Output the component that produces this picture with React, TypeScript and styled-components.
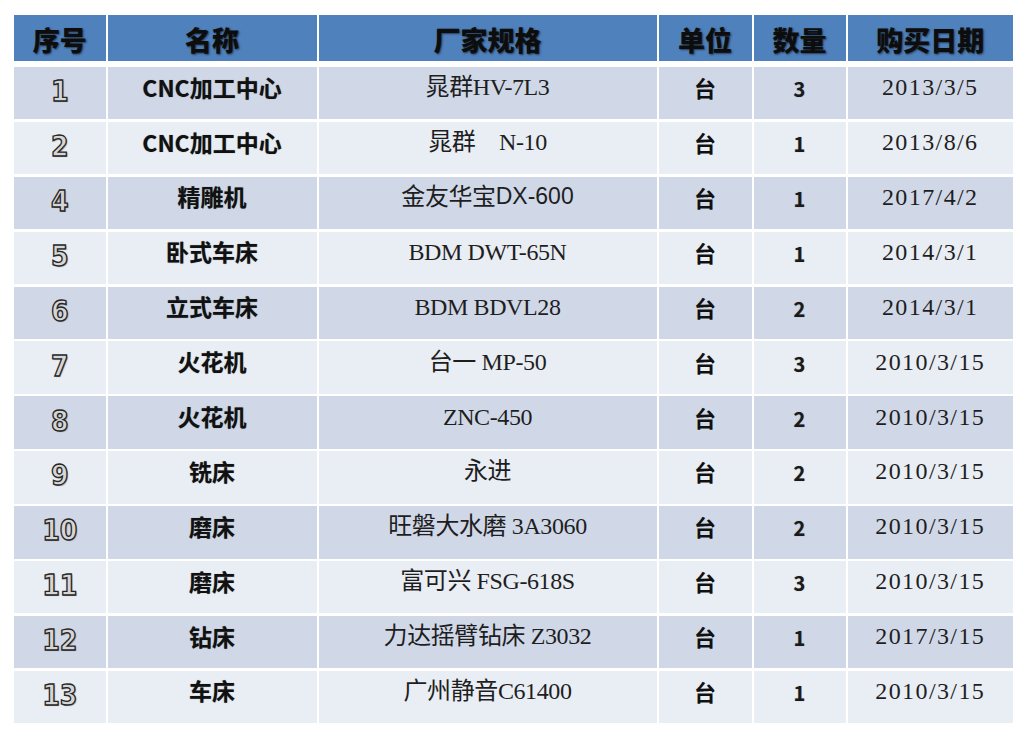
import {type FC} from 'react';
import styled, {createGlobalStyle, css} from 'styled-components';

const GlobalStyle = createGlobalStyle`
    html, body {
        margin: 0;
        padding: 0;
        background: #ffffff;
    }
    body {
        font-family: "Noto Sans CJK SC", "Liberation Sans", sans-serif;
        color: #111;
    }
`;

const COLUMNS = '91.5px 209px 338px 93px 92px 165.5px';

const Page = styled.div`
    width: 1027px;
    height: 752px;
    padding: 15px 0 0 14px;
    box-sizing: border-box;
`;

const Table = styled.div`
    width: 999px;
    display: flex;
    flex-direction: column;
`;

const HeaderRow = styled.div`
    display: grid;
    grid-template-columns: ${COLUMNS};
    column-gap: 2px;
    height: 46px;
    margin-bottom: 6px;
`;

const HeaderCell = styled.div`
    background: #4f81bd;
    display: flex;
    align-items: center;
    justify-content: center;
    padding-top: 3px;
    box-sizing: border-box;
    font-family: "Noto Sans CJK SC", sans-serif;
    font-weight: 900;
    font-size: 27px;
    color: #0d0d0d;
    text-shadow: 1px 1px 2px rgba(0, 0, 0, 0.55);
`;

const Body = styled.div`
    display: flex;
    flex-direction: column;
    gap: 2.5px;
`;

const Row = styled.div<{ $odd: boolean }>`
    display: grid;
    grid-template-columns: ${COLUMNS};
    column-gap: 2px;
    height: 52.4px;
    background: #ffffff;
    & > div {
        background: ${p => (p.$odd ? '#d0d8e8' : '#e9edf4')};
    }
`;

type Kind = 'no' | 'name' | 'spec' | 'unit' | 'qty' | 'date';

const kindStyles: Record<Kind, ReturnType<typeof css>> = {
    no: css`
        padding-bottom: 2px;
        font-family: "DejaVu Sans Condensed", "DejaVu Sans", sans-serif;
        font-stretch: condensed;
        font-weight: 700;
        font-size: 28px;
        color: #d6d6d6;
        -webkit-text-stroke: 1.3px #262626;
        text-shadow: 1px 1px 1px rgba(0, 0, 0, 0.35);
    `,
    name: css`
        font-family: "Noto Sans CJK SC", sans-serif;
        font-weight: 700;
        font-size: 23px;
        color: #111;
        text-shadow: 0 0 1px rgba(0, 0, 0, 0.45);
    `,
    spec: css`
        font-family: "Liberation Serif", "Noto Sans CJK SC", serif;
        font-size: 24px;
        letter-spacing: -0.4px;
        color: #1e1e1e;
    `,
    unit: css`
        font-family: "Noto Sans CJK SC", sans-serif;
        font-weight: 700;
        font-size: 22px;
        color: #111;
    `,
    qty: css`
        padding-bottom: 8px;
        font-family: "Noto Sans CJK SC", sans-serif;
        font-weight: 700;
        font-size: 20px;
        color: #1a1a1a;
        text-shadow: 0 0 1px rgba(0, 0, 0, 0.4);
    `,
    date: css`
        font-family: "Liberation Serif", serif;
        font-size: 24px;
        letter-spacing: 1.4px;
        color: #1e1e1e;
    `,
};

const Cell = styled.div<{ $kind: Kind }>`
    display: flex;
    align-items: center;
    justify-content: center;
    box-sizing: border-box;
    padding-bottom: 12px;
    white-space: pre;
    line-height: 1;
    ${p => kindStyles[p.$kind]}
`;

const SansPart = styled.span`
    font-family: "Liberation Sans", sans-serif;
    font-size: 23px;
    letter-spacing: 0;
`;

type Item = {
    no: string;
    name: string;
    spec: string;
    specSans?: string;
    unit: string;
    qty: string;
    date: string;
};

const HEADERS = ['序号', '名称', '厂家规格', '单位', '数量', '购买日期'];

const ITEMS: Item[] = [
    {no: '1', name: 'CNC加工中心', spec: '晁群HV-7L3', unit: '台', qty: '3', date: '2013/3/5'},
    {no: '2', name: 'CNC加工中心', spec: '晁群\u3000N-10', unit: '台', qty: '1', date: '2013/8/6'},
    {no: '4', name: '精雕机', spec: '金友华宝', specSans: 'DX-600', unit: '台', qty: '1', date: '2017/4/2'},
    {no: '5', name: '卧式车床', spec: 'BDM DWT-65N', unit: '台', qty: '1', date: '2014/3/1'},
    {no: '6', name: '立式车床', spec: 'BDM BDVL28', unit: '台', qty: '2', date: '2014/3/1'},
    {no: '7', name: '火花机', spec: '台一 MP-50', unit: '台', qty: '3', date: '2010/3/15'},
    {no: '8', name: '火花机', spec: 'ZNC-450', unit: '台', qty: '2', date: '2010/3/15'},
    {no: '9', name: '铣床', spec: '永进', unit: '台', qty: '2', date: '2010/3/15'},
    {no: '10', name: '磨床', spec: '旺磐大水磨 3A3060', unit: '台', qty: '2', date: '2010/3/15'},
    {no: '11', name: '磨床', spec: '富可兴 FSG-618S', unit: '台', qty: '3', date: '2010/3/15'},
    {no: '12', name: '钻床', spec: '力达摇臂钻床 Z3032', unit: '台', qty: '1', date: '2017/3/15'},
    {no: '13', name: '车床', spec: '广州静音C61400', unit: '台', qty: '1', date: '2010/3/15'},
];

export default function App() {
    return (
        <>
            <GlobalStyle/>
            <Page>
                <Table>
                    <HeaderRow>
                        {HEADERS.map(h => (
                            <HeaderCell key={h}>{h}</HeaderCell>
                        ))}
                    </HeaderRow>
                    <Body>
                        {ITEMS.map((item, i) => (
                            <EquipmentRow key={item.no} item={item} odd={i % 2 === 0}/>
                        ))}
                    </Body>
                </Table>
            </Page>
        </>
    );
}

const EquipmentRow: FC<{ item: Item; odd: boolean }> = ({item, odd}) => (
    <Row $odd={odd}>
        <Cell $kind="no">{item.no}</Cell>
        <Cell $kind="name">{item.name}</Cell>
        <Cell $kind="spec">
            {item.spec}
            {item.specSans && <SansPart>{item.specSans}</SansPart>}
        </Cell>
        <Cell $kind="unit">{item.unit}</Cell>
        <Cell $kind="qty">{item.qty}</Cell>
        <Cell $kind="date">{item.date}</Cell>
    </Row>
);
